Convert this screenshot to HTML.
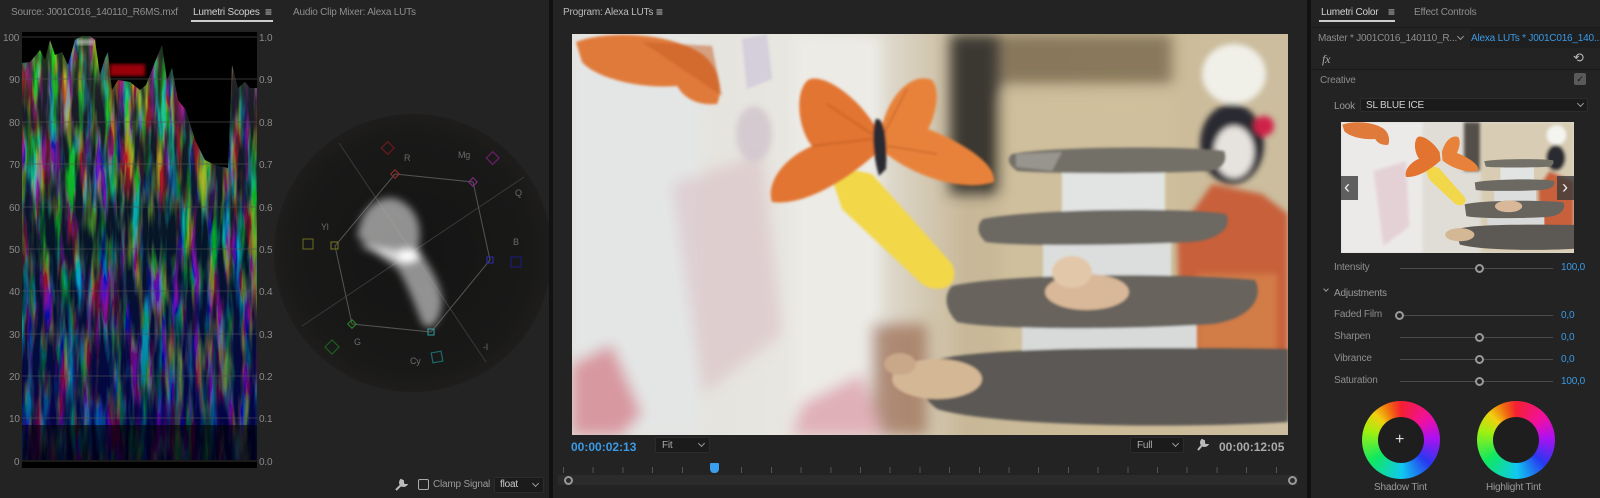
<!DOCTYPE html>
<html><head><meta charset="utf-8">
<style>
*{margin:0;padding:0;box-sizing:border-box}
body{width:1600px;height:498px;background:#111;position:relative;overflow:hidden;font-family:"Liberation Sans",sans-serif;font-size:10px;letter-spacing:-0.2px;color:#9a9a9a}
.p{position:absolute;background:#232323}
.t{position:absolute;white-space:nowrap;line-height:1}
.blue{color:#3a9ae6}
.dd{position:absolute;background:#1b1b1b;border:1px solid #2c2c2c;border-radius:2px}
.chev{position:absolute;width:5px;height:5px;border-right:1px solid #999;border-bottom:1px solid #999;transform:rotate(45deg)}
.track{position:absolute;height:1px;background:#4a4a4a}
.knob{position:absolute;width:9px;height:9px;border:2px solid #9a9a9a;border-radius:50%;background:#232323}
.wheel{position:absolute;width:78px;height:78px;border-radius:50%;background:conic-gradient(#f52030,#f010a0 50deg,#b010f0 85deg,#2838f0 130deg,#10c8f0 178deg,#10e860 235deg,#a0f010 285deg,#f0d010 315deg,#f06a10 340deg,#f52030)}
.wheel::after{content:"";position:absolute;left:16px;top:16px;width:46px;height:46px;border-radius:50%;background:#1e1e1e}
</style></head><body>

<!-- LEFT PANEL -->
<div class="p" style="left:0;top:0;width:549px;height:498px;overflow:hidden">
  <div class="t" style="left:11px;top:8px;color:#8e8e8e">Source: J001C016_140110_R6MS.mxf</div>
  <div class="t" style="left:193px;top:8px;color:#d2d2d2">Lumetri Scopes</div>
  <div class="t" style="left:265px;top:6px;color:#ccc;font-size:12px">≡</div>
  <div style="position:absolute;left:191px;top:20px;width:82px;height:2px;background:#ccc"></div>
  <div class="t" style="left:293px;top:8px;color:#8e8e8e">Audio Clip Mixer: Alexa LUTs</div>

  <svg style="position:absolute;left:0;top:28px" width="549" height="445" viewBox="0 28 549 445">
    <defs>
      <filter id="noise" x="0" y="0" width="100%" height="100%">
        <feTurbulence type="fractalNoise" baseFrequency="0.12 0.015" numOctaves="3" seed="11"/>
        <feColorMatrix type="matrix" values="3.0 -1.0 -0.3 0 -0.6  -0.6 3.4 -0.8 0 -0.6  -1.2 -0.4 3.0 0 -0.55  0 0 0 3 -1.0"/>
      </filter>
      <clipPath id="env">
        <polygon points="22,460 22,63 30,62 36,55 40,50 45,60 50,40 55,55 62,52 68,65 75,40 82,36 90,36 95,40 100,75 105,58 108,52 112,90 118,80 130,82 140,90 146,85 155,62 162,45 167,80 172,68 178,100 186,110 195,140 205,160 215,165 228,168 232,65 238,88 245,82 250,88 257,88 257,460"/>
      </clipPath>
      <linearGradient id="bl" x1="0" y1="0" x2="0" y2="1">
        <stop offset="0" stop-color="#0010b0" stop-opacity="0"/>
        <stop offset=".55" stop-color="#0a10c8" stop-opacity=".2"/>
        <stop offset="1" stop-color="#050080" stop-opacity=".55"/>
      </linearGradient>
      <linearGradient id="gr" x1="0" y1="0" x2="0" y2="1">
        <stop offset="0" stop-color="#60ff40" stop-opacity=".25"/>
        <stop offset=".15" stop-color="#ffffff" stop-opacity=".12"/>
        <stop offset=".5" stop-color="#30d040" stop-opacity=".1"/>
        <stop offset="1" stop-color="#30d040" stop-opacity="0"/>
      </linearGradient>
      <radialGradient id="vs" cx=".5" cy=".5" r=".5">
        <stop offset="0" stop-color="#141414"/>
        <stop offset=".85" stop-color="#191918"/>
        <stop offset="1" stop-color="#1e1d1c"/>
      </radialGradient>
      <filter id="bl2"><feGaussianBlur stdDeviation="4"/></filter>
      <filter id="bl1"><feGaussianBlur stdDeviation="1.5"/></filter>
    </defs>
    <rect x="22" y="32" width="235" height="436" fill="#000"/>
    <g clip-path="url(#env)">
      <rect x="22" y="32" width="235" height="436" filter="url(#noise)" opacity=".8"/>
      <rect x="22" y="32" width="235" height="436" fill="url(#gr)"/>
      <rect x="22" y="32" width="235" height="436" fill="url(#bl)"/>
      <rect x="22" y="425" width="235" height="43" fill="#000" opacity=".6"/>
    </g>
    <rect x="110" y="64" width="35" height="12" fill="#c00010" opacity=".8" filter="url(#bl1)"/>
    <rect x="76" y="39" width="18" height="6" fill="#ddd" opacity=".6" filter="url(#bl1)"/>
    <g stroke="#555" stroke-width="1" opacity=".6">
      <line x1="22" y1="37" x2="257" y2="37"/><line x1="22" y1="79" x2="257" y2="79"/>
      <line x1="22" y1="122" x2="257" y2="122"/><line x1="22" y1="164" x2="257" y2="164"/>
      <line x1="22" y1="207" x2="257" y2="207"/><line x1="22" y1="249" x2="257" y2="249"/>
      <line x1="22" y1="291" x2="257" y2="291"/><line x1="22" y1="334" x2="257" y2="334"/>
      <line x1="22" y1="376" x2="257" y2="376"/><line x1="22" y1="418" x2="257" y2="418"/>
      <line x1="22" y1="461" x2="257" y2="461"/>
    </g>
    <g fill="#8a8a8a" font-family="Liberation Sans" font-size="10">
      <text x="3" y="41">100</text><text x="9" y="83">90</text><text x="9" y="126">80</text>
      <text x="9" y="168">70</text><text x="9" y="211">60</text><text x="9" y="253">50</text>
      <text x="9" y="295">40</text><text x="9" y="338">30</text><text x="9" y="380">20</text>
      <text x="9" y="422">10</text><text x="14" y="465">0</text>
      <text x="259" y="41">1.0</text><text x="259" y="83">0.9</text><text x="259" y="126">0.8</text>
      <text x="259" y="168">0.7</text><text x="259" y="211">0.6</text><text x="259" y="253">0.5</text>
      <text x="259" y="295">0.4</text><text x="259" y="338">0.3</text><text x="259" y="380">0.2</text>
      <text x="259" y="422">0.1</text><text x="259" y="465">0.0</text>
    </g>
    <circle cx="413" cy="253" r="139" fill="url(#vs)"/>
    <g stroke="#3a3a3a" stroke-width="1" fill="none">
      <line x1="339" y1="143" x2="486" y2="362"/>
      <line x1="302" y1="326" x2="524" y2="177"/>
      <polygon points="395,174 473,182 490,260 431,332 352,324 335,246" stroke="#555"/>
    </g>
    <g fill="none" stroke-width="1.2">
      <rect x="383" y="143" width="9" height="9" stroke="#6a1a1a" transform="rotate(45 387 148)"/>
      <rect x="488" y="153" width="9" height="9" stroke="#6a1e6a" transform="rotate(45 492 158)"/>
      <rect x="511" y="257" width="10" height="10" stroke="#1c1c70"/>
      <rect x="432" y="352" width="10" height="10" stroke="#1d6a6a" transform="rotate(-10 437 357)"/>
      <rect x="327" y="342" width="10" height="10" stroke="#1e5e1e" transform="rotate(45 332 347)"/>
      <rect x="303" y="239" width="10" height="10" stroke="#5e5e1e"/>
      <rect x="331" y="242" width="7" height="7" stroke="#6a6a20"/>
      <rect x="392" y="171" width="6" height="6" stroke="#8a2a2a" transform="rotate(45 395 174)"/>
      <rect x="470" y="179" width="6" height="6" stroke="#7a2a7a" transform="rotate(45 473 182)"/>
      <rect x="487" y="257" width="6" height="6" stroke="#2a2a9a"/>
      <rect x="428" y="329" width="6" height="6" stroke="#2a8a8a"/>
      <rect x="349" y="321" width="6" height="6" stroke="#2a7a2a" transform="rotate(45 352 324)"/>
    </g>
    <g fill="#6a6a6a" font-family="Liberation Sans" font-size="9">
      <text x="404" y="161">R</text><text x="458" y="158">Mg</text><text x="515" y="196">Q</text>
      <text x="513" y="245">B</text><text x="483" y="350">-I</text><text x="410" y="364">Cy</text>
      <text x="354" y="345">G</text><text x="321" y="230">Yl</text>
    </g>
    <g filter="url(#bl2)">
      <path d="M362,218 C372,198 392,193 404,203 C420,213 422,233 418,248 C427,263 442,283 442,303 C440,323 430,333 422,323 C414,303 407,283 397,268 C382,258 362,243 357,235 Z" fill="#b0b0b0" opacity=".8"/>
      <ellipse cx="406" cy="256" rx="13" ry="7" fill="#fff"/>
      <path d="M358,245 L402,251 L397,261 Z" fill="#ddd"/>
    </g>
  </svg>
  <svg style="position:absolute;left:394px;top:478px" width="14" height="14" viewBox="0 0 14 14"><path d="M2,12 L8,6 M7,2 A3,3 0 1 0 12,7 L10,7 L9,5 L9,3 Z" stroke="#bbb" stroke-width="2" fill="#bbb"/></svg>
  <div style="position:absolute;left:418px;top:479px;width:11px;height:11px;border:1px solid #aaa;border-radius:2px"></div>
  <div class="t" style="left:433px;top:480px;color:#999">Clamp Signal</div>
  <div class="dd" style="left:494px;top:477px;width:50px;height:16px"></div>
  <div class="t" style="left:500px;top:480px;color:#ccc">float</div>
  <div class="chev" style="left:533px;top:481px"></div>
</div>

<!-- MIDDLE PANEL -->
<div class="p" style="left:553px;top:0;width:754px;height:498px">
  <div class="t" style="left:10px;top:8px;color:#bbb">Program: Alexa LUTs</div>
  <div class="t" style="left:103px;top:6px;color:#ccc;font-size:12px">≡</div>
</div>
<svg style="position:absolute;left:572px;top:34px" width="716" height="401" viewBox="0 0 716 401">
  <defs>
    <filter id="b6"><feGaussianBlur stdDeviation="7"/></filter>
    <filter id="b3"><feGaussianBlur stdDeviation="3"/></filter>
    <filter id="b1"><feGaussianBlur stdDeviation="1.2"/></filter>
    <linearGradient id="bg" x1="0" x2="1">
      <stop offset="0" stop-color="#e2e0da"/><stop offset=".3" stop-color="#e8e6e0"/>
      <stop offset=".45" stop-color="#dcd6c8"/><stop offset=".55" stop-color="#c8b898"/>
      <stop offset=".75" stop-color="#cdbc98"/><stop offset="1" stop-color="#cbbd9e"/>
    </linearGradient>
  </defs>
  <rect width="716" height="401" fill="url(#bg)"/>
  <g filter="url(#b6)">
    <rect x="0" y="0" width="130" height="401" fill="#e4e6e6"/>
    <path d="M100,150 L190,120 L210,300 L130,360 Z" fill="#d8b8c0" opacity=".5"/>
    <rect x="220" y="0" width="90" height="401" fill="#ecebe6"/>
    <rect x="378" y="0" width="50" height="160" fill="#3a3830"/>
    <rect x="430" y="0" width="170" height="50" fill="#5a4c34" opacity=".6"/>
    <rect x="430" y="60" width="175" height="290" fill="#cfbf9c"/>
    <rect x="300" y="290" width="55" height="111" fill="#9a6a50" opacity=".7"/>
    <path d="M0,330 L40,310 L70,380 L50,401 L0,401Z" fill="#d898a0"/>
    <path d="M230,370 L290,340 L310,401 L220,401Z" fill="#e0b0b8"/>
  </g>
  <g filter="url(#b3)">
    <ellipse cx="662" cy="40" rx="32" ry="30" fill="#f0efe8"/>
    <ellipse cx="660" cy="110" rx="32" ry="40" fill="#2c2c32"/>
    <ellipse cx="662" cy="118" rx="20" ry="26" fill="#e6e2de"/>
    <path d="M605,200 L640,150 L690,160 L716,180 L716,380 L610,380 Z" fill="#c8603a"/>
    <rect x="625" y="240" width="80" height="90" fill="#d89050" opacity=".6"/>
    <circle cx="692" cy="92" r="10" fill="#d02048"/>
  </g>
  <g filter="url(#b1)">
    <path d="M4,8 C40,-5 100,0 130,20 C150,35 150,60 145,70 C120,72 110,60 105,52 C70,55 25,45 10,28 Z" fill="#e07a3a"/>
    <path d="M70,8 L140,12 L150,62 Z" fill="#c65a22" opacity=".5"/>
    <path d="M170,5 L195,0 L200,45 L175,55 Z" fill="#c8c0d8" opacity=".6"/>
  </g>
  <path d="M255,130 L300,140 L380,230 C390,255 365,260 350,250 L270,175 Z" fill="#f2d74a" filter="url(#b1)"/>
  <ellipse cx="182" cy="100" rx="18" ry="28" fill="#d0c4cc" opacity=".8" filter="url(#b3)"/>
  <g filter="url(#b1)">
    <path d="M303,92 C285,62 250,38 236,46 C222,58 226,95 240,112 C210,125 194,150 200,168 C230,172 270,150 306,118 Z" fill="#e27430"/>
    <path d="M310,92 C318,60 340,38 360,46 C370,58 362,85 356,95 C390,108 425,130 422,148 C395,158 345,145 312,118 Z" fill="#e8823a"/>
    <path d="M240,112 L300,105 M255,70 L300,100 M335,55 L312,100 M365,120 L316,112" stroke="#a84a18" stroke-width="1.2" fill="none" opacity=".6"/>
    <path d="M304,85 C311,83 316,100 314,135 L307,142 C301,122 299,95 304,85 Z" fill="#2c2c30"/>
  </g>
  <g filter="url(#b1)">
    <rect x="450" y="286" width="175" height="75" rx="8" fill="#d8dad9"/>
    <path d="M352,330 C380,315 520,312 716,315 L716,388 C600,395 420,392 365,375 C345,360 345,340 352,330 Z" fill="#5c5954"/>
    <rect x="471" y="205" width="128" height="58" rx="6" fill="#dcdedd"/>
    <path d="M380,252 C430,240 600,238 683,246 C692,262 680,285 640,290 C560,296 420,296 385,288 C372,275 372,260 380,252 Z" fill="#67635d"/>
    <rect x="490" y="133" width="103" height="74" rx="6" fill="#e2e4e3"/>
    <path d="M411,185 C450,176 600,172 654,180 C660,192 650,205 620,208 C540,212 440,212 414,208 C404,200 405,190 411,185 Z" fill="#6c6862"/>
    <path d="M440,120 C480,112 620,112 652,117 C656,127 650,135 638,137 C580,140 480,140 445,137 C435,130 435,124 440,120 Z" fill="#737068"/>
    <path d="M444,120 L490,118 L480,137 L444,133Z" fill="#b0aca8" opacity=".6"/>
    <ellipse cx="515" cy="258" rx="42" ry="18" fill="#d8b898"/>
    <ellipse cx="500" cy="238" rx="20" ry="16" fill="#e2c8a8"/>
    <ellipse cx="365" cy="345" rx="45" ry="20" fill="#d4b896"/>
    <ellipse cx="328" cy="330" rx="16" ry="11" fill="#c8a888"/>
  </g>
</svg>
<div class="t blue" style="left:571px;top:441px;font-size:12px;font-weight:bold;letter-spacing:0">00:00:02:13</div>
<div class="dd" style="left:655px;top:437px;width:55px;height:16px"></div>
<div class="t" style="left:662px;top:441px;color:#aaa">Fit</div>
<div class="chev" style="left:699px;top:441px"></div>
<div class="dd" style="left:1130px;top:437px;width:54px;height:16px"></div>
<div class="t" style="left:1137px;top:441px;color:#aaa">Full</div>
<div class="chev" style="left:1173px;top:441px"></div>
<svg style="position:absolute;left:1195px;top:438px" width="14" height="14" viewBox="0 0 14 14"><path d="M3,12 L8,6 M7,2 A3,3 0 1 0 12,7 L10,7 L9,5 L9,3 Z" stroke="#bbb" stroke-width="2" fill="#bbb"/></svg>
<div class="t" style="left:1219px;top:441px;color:#aaa;font-size:12px;font-weight:bold;letter-spacing:0">00:00:12:05</div>
<div style="position:absolute;left:563px;top:467px;width:725px;height:6px;background:repeating-linear-gradient(90deg,#555 0 1px,transparent 1px 29.7px)"></div>
<div style="position:absolute;left:558px;top:475px;width:740px;height:10px;background:#2b2b2b"></div>
<div style="position:absolute;left:564px;top:476px;width:9px;height:9px;border:2px solid #999;border-radius:50%"></div>
<div style="position:absolute;left:1288px;top:476px;width:9px;height:9px;border:2px solid #999;border-radius:50%"></div>
<div style="position:absolute;left:710px;top:463px;width:9px;height:10px;background:#3aa0ee;border-radius:1px 1px 4px 4px"></div>

<!-- RIGHT PANEL -->
<div class="p" style="left:1311px;top:0;width:289px;height:498px">
  <div class="t" style="left:10px;top:8px;color:#d2d2d2">Lumetri Color</div>
  <div class="t" style="left:77px;top:6px;color:#ccc;font-size:12px">≡</div>
  <div style="position:absolute;left:8px;top:20px;width:76px;height:2px;background:#ccc"></div>
  <div class="t" style="left:103px;top:8px;color:#8e8e8e">Effect Controls</div>
  <div style="position:absolute;left:0;top:27px;width:289px;height:1px;background:#191919"></div>
  <div class="t" style="left:7px;top:34px;color:#8e8e8e">Master * J001C016_140110_R...</div>
  <div class="chev" style="left:147px;top:34px"></div>
  <div style="position:absolute;left:159px;top:28px;width:130px;height:20px;background:#1f1f1f"></div>
  <div class="t blue" style="left:160px;top:34px">Alexa LUTs * J001C016_140...</div>
  <div class="t" style="left:11px;top:53px;color:#aaa;font-style:italic;font-family:'Liberation Serif',serif;font-size:12px">fx</div>
  <div class="t" style="left:262px;top:51px;color:#bbb;font-size:13px">⟲</div>
  <div style="position:absolute;left:0;top:69px;width:289px;height:1px;background:#191919"></div>
  <div class="t" style="left:9px;top:76px;color:#8a8a8a">Creative</div>
  <div style="position:absolute;left:263px;top:73px;width:12px;height:12px;background:#5a5a5a;border-radius:2px;color:#111;font-size:9px;text-align:center;line-height:12px">✓</div>
  <div class="t" style="left:23px;top:102px;color:#9a9a9a">Look</div>
  <div class="dd" style="left:49px;top:98px;width:228px;height:14px"></div>
  <div class="t" style="left:55px;top:101px;color:#cfcfcf">SL BLUE ICE</div>
  <div class="chev" style="left:267px;top:101px"></div>
</div>
<svg style="position:absolute;left:1341px;top:122px" width="233" height="131" viewBox="0 0 716 401" preserveAspectRatio="none">
  <defs><filter id="tb"><feGaussianBlur stdDeviation="5"/></filter></defs>
  <rect width="716" height="401" fill="#e0ddd6"/>
  <g filter="url(#tb)">
    <rect x="0" y="0" width="250" height="401" fill="#eceae8"/>
    <path d="M100,150 L200,120 L210,320 L130,380Z" fill="#e0c0c8" opacity=".6"/>
    <rect x="430" y="0" width="286" height="401" fill="#d8cdb4"/>
    <rect x="378" y="0" width="50" height="150" fill="#555048"/>
    <path d="M605,200 L640,150 L716,180 L716,380 L610,380 Z" fill="#c8603a"/>
    <ellipse cx="660" cy="110" rx="30" ry="40" fill="#2a2a30"/>
    <ellipse cx="662" cy="40" rx="30" ry="30" fill="#f4f4f0"/>
  </g>
  <path d="M255,130 L300,140 L380,230 C390,255 365,260 350,250 L270,175 Z" fill="#f2d74a"/>
  <path d="M4,8 C40,-5 100,0 130,20 C150,35 150,60 145,70 C120,72 110,60 105,52 C70,55 25,45 10,28 Z" fill="#e07a3a"/>
  <path d="M303,92 C285,62 250,38 236,46 C222,58 226,95 240,112 C210,125 194,150 200,168 C230,172 270,150 306,118 Z" fill="#e27430"/>
  <path d="M310,92 C318,60 340,38 360,46 C370,58 362,85 356,95 C390,108 425,130 422,148 C395,158 345,145 312,118 Z" fill="#e8823a"/>
  <rect x="450" y="286" width="175" height="75" rx="8" fill="#d8dad9"/>
  <path d="M352,330 C380,315 520,312 716,315 L716,388 C600,395 420,392 365,375 Z" fill="#5c5954"/>
  <rect x="471" y="205" width="128" height="58" rx="6" fill="#dcdedd"/>
  <path d="M380,252 C430,240 600,238 683,246 C692,262 680,285 640,290 C560,296 420,296 385,288 Z" fill="#67635d"/>
  <rect x="490" y="133" width="103" height="74" rx="6" fill="#e2e4e3"/>
  <path d="M411,185 C450,176 600,172 654,180 C660,192 650,205 620,208 C540,212 440,212 414,208 Z" fill="#6c6862"/>
  <path d="M440,120 C480,112 620,112 652,117 C656,127 650,135 638,137 C580,140 480,140 445,137 Z" fill="#737068"/>
  <ellipse cx="515" cy="258" rx="42" ry="18" fill="#d8b898"/>
  <ellipse cx="365" cy="345" rx="45" ry="20" fill="#d4b896"/>
</svg>
<div style="position:absolute;left:1341px;top:176px;width:17px;height:24px;background:rgba(60,60,60,.8)"></div>
<div class="t" style="left:1344px;top:178px;color:#eee;font-size:18px">‹</div>
<div style="position:absolute;left:1557px;top:176px;width:17px;height:24px;background:rgba(60,60,60,.8)"></div>
<div class="t" style="left:1562px;top:178px;color:#eee;font-size:18px">›</div>

<div class="t" style="left:1334px;top:263px;color:#8e8e8e">Intensity</div>
<div class="track" style="left:1400px;top:268px;width:153px"></div>
<div class="knob" style="left:1475px;top:264px"></div>
<div class="t blue" style="left:1561px;top:263px">100,0</div>

<div class="chev" style="left:1324px;top:287px;width:4px;height:4px"></div>
<div class="t" style="left:1334px;top:289px;color:#9a9a9a">Adjustments</div>

<div class="t" style="left:1334px;top:310px;color:#8e8e8e">Faded Film</div>
<div class="track" style="left:1400px;top:315px;width:153px"></div>
<div class="knob" style="left:1395px;top:311px"></div>
<div class="t blue" style="left:1561px;top:311px">0,0</div>

<div class="t" style="left:1334px;top:332px;color:#8e8e8e">Sharpen</div>
<div class="track" style="left:1400px;top:337px;width:153px"></div>
<div class="knob" style="left:1475px;top:333px"></div>
<div class="t blue" style="left:1561px;top:333px">0,0</div>

<div class="t" style="left:1334px;top:354px;color:#8e8e8e">Vibrance</div>
<div class="track" style="left:1400px;top:359px;width:153px"></div>
<div class="knob" style="left:1475px;top:355px"></div>
<div class="t blue" style="left:1561px;top:355px">0,0</div>

<div class="t" style="left:1334px;top:376px;color:#8e8e8e">Saturation</div>
<div class="track" style="left:1400px;top:381px;width:153px"></div>
<div class="knob" style="left:1475px;top:377px"></div>
<div class="t blue" style="left:1561px;top:377px">100,0</div>

<div class="wheel" style="left:1362px;top:401px"></div>
<div class="t" style="left:1395px;top:432px;color:#ddd;font-size:16px">+</div>
<div class="wheel" style="left:1477px;top:401px"></div>
<div class="t" style="left:1374px;top:483px;color:#9a9a9a">Shadow Tint</div>
<div class="t" style="left:1486px;top:483px;color:#9a9a9a">Highlight Tint</div>
</body></html>
